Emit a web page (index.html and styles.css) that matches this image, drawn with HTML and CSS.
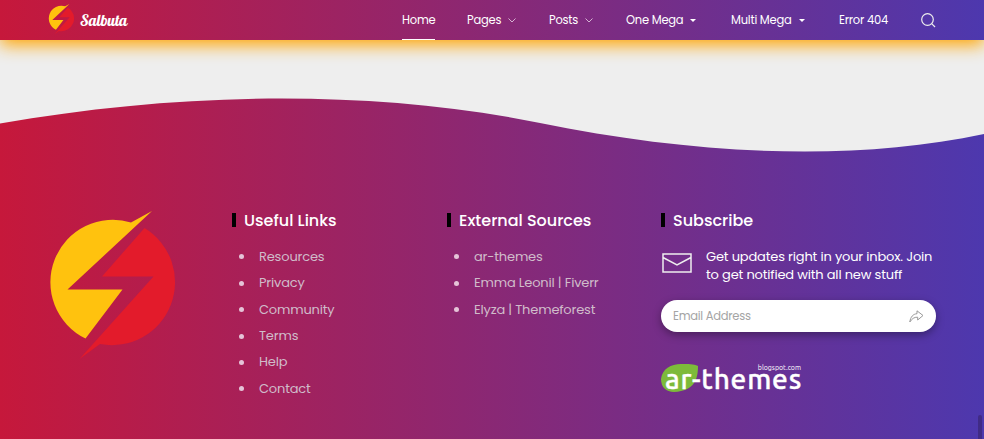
FILE: index.html
```html
<!DOCTYPE html>
<html lang="en">
<head>
<meta charset="utf-8">
<title>Salbuta</title>
<link rel="stylesheet" href="styles.css">
</head>
<body>
<svg class="defs" width="0" height="0">
  <symbol id="bolt" viewBox="0 0 126 148">
    <path fill="#ffc20e" d="M102 0 L17.500 78.500 H72.500 L35.500 127.500 A62.500 62.500 0 0 1 81 11.500 Z"/>
    <path fill="#e31b2b" d="M94.500 17 A63.100 63.100 0 0 1 50 133 L29.500 148 L103.500 65.500 H52 Z"/>
  </symbol>
</svg>
<header class="header">
  <a class="brand"><svg class="brand-mark"><use href="#bolt"/></svg><span>Salbuta</span></a>
  <nav class="nav">
    <a class="active">Home</a>
    <a>Pages <svg class="chevron" viewBox="0 0 8 5"><path d="M.5.500 4 4 7.500.500"/></svg></a>
    <a>Posts <svg class="chevron" viewBox="0 0 8 5"><path d="M.5.500 4 4 7.500.500"/></svg></a>
    <a>One Mega <i class="caret"></i></a>
    <a>Multi Mega <i class="caret"></i></a>
    <a>Error 404</a>
    <a><svg class="search" viewBox="0 0 15 15"><circle cx="6.500" cy="6.500" r="5.800"/><path d="m10.700 10.700 3.300 3.300"/></svg></a>
  </nav>
</header>
<footer class="footer">
  <svg class="wave" viewBox="0 0 984 112" preserveAspectRatio="none"><path d="M0 83.500C180 52 370 48.500 540 83C695 114.500 850 122.500 984 94V0H0Z"/></svg>
  <div class="columns">
    <svg class="logo"><use href="#bolt"/></svg>
    <section>
      <h2>Useful Links</h2>
      <ul><li>Resources</li><li>Privacy</li><li>Community</li><li>Terms</li><li>Help</li><li>Contact</li></ul>
    </section>
    <section>
      <h2>External Sources</h2>
      <ul><li>ar-themes</li><li>Emma Leonil | Fiverr</li><li>Elyza | Themeforest</li></ul>
    </section>
    <section>
      <h2>Subscribe</h2>
      <div class="pitch">
        <svg class="mail" viewBox="0 0 30 20"><path d="M1 1H29V19H1ZM1 4.500 15 12 29 4.500"/></svg>
        <p>Get updates right in your inbox. Join<br><span>to get notified with all new stuff</span></p>
      </div>
      <div class="field"><span>Email Address</span>
        <svg class="send" viewBox="0 0 15 13"><path d="M.8 12C1.500 7 4 4 8 3.700V.8L14 5.500 8.700 10V7.200C5 7 3 8.800.8 12Z"/></svg>
      </div>
      <div class="credit">
        <svg class="leaf" viewBox="0 0 38 28"><path d="M37 2C37 14 34 27 13 28C5 28 0 23 0 15C1 5 10 0 20 0C28 0 32 0 37 2Z"/></svg>
        <span class="credit-name">ar-themes</span>
        <span class="credit-host">blogspot.com</span>
      </div>
    </section>
  </div>
  <i class="scroll-thumb"></i>
</footer>
</body>
</html>
```
FILE: styles.css
```css
* { box-sizing: border-box; }
body {
  margin: 0;
  height: 439px;
  overflow: hidden;
  background: #eee;
  color: #fff;
  font-family: Poppins, Inter, sans-serif;
}
.defs { position: absolute; }
.header, .footer { background: linear-gradient(90deg, #c6183b, #4d38ae); }
.header {
  position: relative;
  z-index: 1;
  display: flex;
  height: 40px;
  padding-left: 48px;
  box-shadow: 0 5px 17px #ffa500;
}
.brand {
  display: flex;
  width: 354px;
  gap: 5px;
  font: 15.500px/40px "Lobster", "Liberation Serif", serif;
  letter-spacing: -.1px;
}
.brand-mark { width: 27px; height: 30px; margin-top: 4px; }
.nav {
  display: grid;
  grid-template-columns: 65px 82px 77px 105px 108px 82px 15px;
  font-size: 11.500px;
  line-height: 40px;
  letter-spacing: -.22px;
}
.nav a { display: flex; align-items: center; justify-self: start; height: 40px; }
.active { border-bottom: 1px solid #fff; }
.chevron { width: 8px; height: 5px; margin-left: 7px; }
.chevron path { fill: none; stroke: #d5b2d2; }
.caret { margin-left: 7px; border: 3px solid transparent; border-top-color: #fff; border-bottom: 0; }
.search { width: 15px; height: 15px; }
.search * { fill: none; stroke: #eee; stroke-width: 1.200; }
.footer { position: relative; height: 399px; }
.wave { display: block; width: 100%; height: 112px; }
.wave path { fill: #eee; }
.columns {
  display: grid;
  grid-template-columns: 182px 215px 214px 275px;
  padding: 59px 0 0 50px;
}
.logo { width: 126px; height: 148px; }
h2 {
  display: flex;
  align-items: center;
  gap: 8px;
  height: 18px;
  margin: 0;
  font-size: 16px;
  font-weight: 500;
  white-space: nowrap;
}
h2::before { content: ""; width: 4px; height: 14px; background: #000; }
ul { margin: 14.700px 0 0; padding: 0; list-style: none; }
li {
  display: flex;
  align-items: center;
  height: 26.400px;
  padding-left: 7px;
  color: #d0bcca;
  font-size: 13px;
  letter-spacing: -.17px;
  white-space: nowrap;
}
li::before { content: ""; width: 5px; height: 5px; margin-right: 15px; border-radius: 50%; background: #e5c4d8; }
.pitch { display: flex; gap: 14px; padding: 18px 0 0 1px; }
.mail { width: 30px; height: 20px; margin-top: 6px; }
.mail path { fill: none; stroke: #eee; stroke-width: 1.500; }
p { margin: 1px 0 -1px; font-size: 13px; line-height: 18px; letter-spacing: -.17px; white-space: nowrap; }
.field {
  display: flex;
  align-items: center;
  justify-content: space-between;
  height: 32px;
  margin-top: 17px;
  padding: 0 12px;
  border-radius: 16px;
  background: #fff;
  box-shadow: 0 3px 8px rgba(0, 0, 0, .35);
  color: #a4a4a4;
  font-size: 11.500px;
  letter-spacing: -.25px;
}
.send { width: 15px; height: 13px; }
.send path { fill: none; stroke: #999; }
.credit { position: relative; height: 28px; margin-top: 32px; }
.leaf { display: block; width: 38px; height: 28px; }
.leaf path { fill: #7dba3a; }
.credit-name {
  position: absolute;
  left: 4px;
  top: 1px;
  font: 500 28px/28px Ubuntu, "Noto Sans", sans-serif;
  letter-spacing: .8px;
  -webkit-text-stroke: .4px #fff;
  white-space: nowrap;
}
.credit-host {
  position: absolute;
  right: 135px;
  top: -1px;
  font: 7px/8px Ubuntu, "Noto Sans", sans-serif;
}
.scroll-thumb {
  position: absolute;
  right: 2px;
  bottom: 0;
  width: 4px;
  height: 24px;
  border-radius: 3px 3px 0 0;
  background: #402b86;
}
```
